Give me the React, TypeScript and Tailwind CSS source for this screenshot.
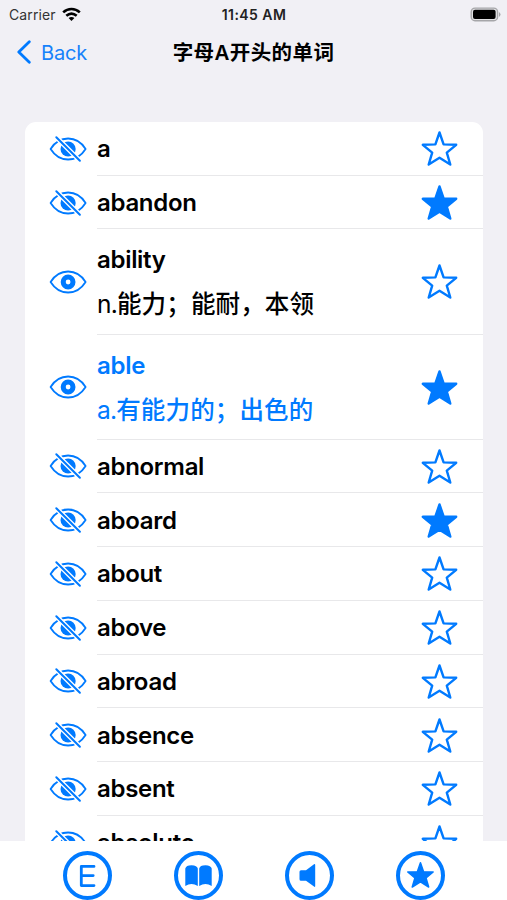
import React from "react";

const words = [
  { word: "a" },
  { word: "abandon", starred: true },
  { word: "ability", meaning: "n.能力；能耐，本领" },
  { word: "able", meaning: "a.有能力的；出色的", starred: true, active: true },
  { word: "abnormal" },
  { word: "aboard", starred: true },
  { word: "about" },
  { word: "above" },
  { word: "abroad" },
  { word: "absence" },
  { word: "absent" },
  { word: "absolute" },
];

const starPath =
  "M18.5 3L22.6 14.9L35.2 15.3L25.8 23.2L29.3 35L18.5 28.2L7.7 35L11.2 23.2L1.8 15.3L14.4 14.9Z";

function Star({ filled }: { filled?: boolean }) {
  return (
    <svg width="38" height="38" viewBox="0 -0.5 38 38" className="shrink-0">
      <path
        d={starPath}
        fill={filled ? "#007aff" : "none"}
        stroke="#007aff"
        strokeWidth="2.4"
        strokeLinejoin="round"
      />
    </svg>
  );
}

function Eye({ open }: { open?: boolean }) {
  const lid = "M1 12C5 5.6 11 1.5 18.5 1.5S32 5.6 36 12C32 18.4 26 22.5 18.5 22.5S5 18.4 1 12Z";
  return (
    <svg width="37" height="26" viewBox="0.4 -1 37 26" className="shrink-0 overflow-visible" fill="none" stroke="#007aff">
      <path d={lid} strokeWidth="1.8" strokeLinejoin="round" />
      {open ? (
        <circle cx="18.5" cy="12" r="4.9" strokeWidth="5" />
      ) : (
        <>
          <circle cx="18.5" cy="12" r="7.6" fill="#007aff" stroke="none" />
          <path d="M6.5 0L30.5 24" stroke="white" strokeWidth="4.6" />
          <path d="M6.7 0.2L30.3 23.8" strokeWidth="2" strokeLinecap="round" />
        </>
      )}
    </svg>
  );
}

function RoundButton({ label, children }: { label: string; children: React.ReactNode }) {
  return (
    <button aria-label={label} className="size-[49px]">
      <svg width="49" height="49" viewBox="0 0 49 49" fill="#007aff">
        <circle cx="24.5" cy="24.5" r="22.5" fill="none" stroke="#007aff" strokeWidth="4" />
        {children}
      </svg>
    </button>
  );
}

function App() {
  return (
    <div className="flex h-[900px] w-[507px] flex-col overflow-hidden bg-[#f1f0f5] font-[Inter,'Noto_Sans_CJK_SC',sans-serif] text-black">
      {/* Status bar */}
      <div className="grid h-7 shrink-0 grid-cols-3 items-center pl-[9px] pr-[6px] text-[14px]">
        <div className="flex items-center gap-[6px] text-[#333]">
          <span className="tracking-[0.1px]">Carrier</span>
          <svg width="19" height="15" viewBox="0 0 19 15" fill="none" stroke="black" strokeWidth="2.6">
            <path d="M1.2 5.4C6 0.9 13 0.9 17.8 5.4" />
            <path d="M4.3 8.8C7.5 6 11.5 6 14.7 8.8" />
            <path d="M9.5 14L6.6 11.1C8.3 9.7 10.7 9.7 12.4 11.1Z" fill="black" stroke="none" />
          </svg>
        </div>
        <span className="pr-[2px] text-center font-semibold tracking-[0.45px] text-[#222]">11:45 AM</span>
        <svg width="31" height="15" viewBox="0 0 31 15" className="ml-auto">
          <rect x="1.2" y="1.1" width="26.4" height="12.6" rx="3.8" fill="#e1e1e4" stroke="#a6a6a9" strokeWidth="1.4" />
          <rect x="3" y="2.8" width="22.6" height="9.2" rx="2" fill="black" />
          <path d="M29 5Q32 7.5 29 10Z" fill="#a6a6a9" />
        </svg>
      </div>

      {/* Navigation */}
      <div className="grid h-[48px] shrink-0 grid-cols-3 items-center">
        <button className="flex items-center gap-[10px] pl-[17px] text-[20px] tracking-[-0.2px] text-[#1682fb]">
          <svg width="14" height="24" viewBox="0 0 14 24" fill="none" stroke="#007aff" strokeWidth="2.8" strokeLinecap="round" strokeLinejoin="round">
            <path d="M12.3 1.7L1.8 12L12.3 22.3" />
          </svg>
          <span className="pt-px">Back</span>
        </button>
        <h1 className="whitespace-nowrap pt-[2px] text-center text-[20.5px] font-semibold tracking-[0.4px]">字母A开头的单词</h1>
      </div>

      {/* Word list */}
      <ul className="mx-[25px] mt-[46px] min-h-0 w-[458px] flex-1 overflow-hidden rounded-t-[11px] bg-white">
        {words.map(({ word, meaning, starred, active }) => (
          <li
            key={word}
            className={`flex items-center pl-[25px] ${meaning ? "h-[105.1px]" : "h-[53.72px]"} ${active ? "text-[#007aff]" : ""}`}
          >
            <Eye open={!!meaning} />
            <div className="ml-[10px] flex h-full flex-1 items-center justify-between border-b border-[#e8e8ea] pr-[24px]">
              <div className="pt-[2px]">
                <div className="text-[24px] font-semibold leading-[30px] tracking-[-0.3px]">{word}</div>
                {meaning && (
                  <div className="mt-[14px] text-[24.5px] leading-[30px]">
                    <span className="tracking-[-0.8px]">{meaning.slice(0, 2)}</span>
                    <span className="font-[450] tracking-[0.15px]">{meaning.slice(2)}</span>
                  </div>
                )}
              </div>
              <Star filled={starred} />
            </div>
          </li>
        ))}
      </ul>

      {/* Bottom toolbar */}
      <div className="flex h-[59px] shrink-0 justify-between bg-white pl-[63px] pr-[62px] pt-[10px]">
        <RoundButton label="English">
          <path d="M31 15.4H18.3V34.6H31M18.3 24.6H30.2" fill="none" stroke="#007aff" strokeWidth="2.8" strokeLinecap="round" strokeLinejoin="round" />
        </RoundButton>
        <RoundButton label="Dictionary">
          <path d="M11.3 17.5Q12 14.3 17.5 14.2Q23.2 14.4 23.8 17.5V35Q17.5 31 11.3 35Z" />
          <path d="M25.2 17.5Q25.8 14.3 31.5 14.2Q37 14.4 37.7 17.5V35Q31.5 31 25.2 35Z" />
        </RoundButton>
        <RoundButton label="Speak">
          <path d="M16 19.3H21L29 13.3Q30.2 12.5 30.2 14V35Q30.2 36.5 29 35.6L21 29.7H16Q14.5 29.7 14.5 28.2V20.8Q14.5 19.3 16 19.3Z" />
        </RoundButton>
        <RoundButton label="Starred">
          <path d={starPath} transform="translate(10.4 9.4) scale(0.76)" stroke="#007aff" strokeWidth="2" strokeLinejoin="round" />
        </RoundButton>
      </div>
    </div>
  );
}

export default App;
